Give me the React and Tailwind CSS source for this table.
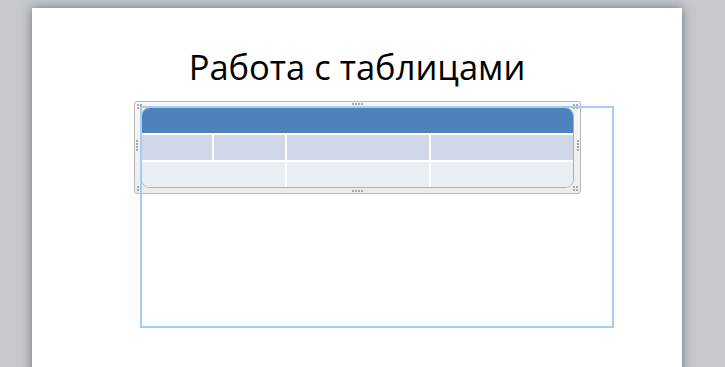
export default function App() {
  const dots = "flex gap-[1px]";
  const Dot = () => <span className="block h-[2px] w-[2px] bg-[#a8a8a8]" />;
  return (
    <div className="flex h-[367px] w-[725px] overflow-hidden bg-[#c5c9ce] pl-[32px] pt-[8px]">
      <div className="relative h-[400px] w-[650px] shrink-0 bg-white shadow-[0_0_10px_rgba(40,45,55,0.55)]">
        {/* slide title */}
        <div className="flex h-[84px] items-end justify-center pb-[8px] font-['Open_Sans',sans-serif] text-[34.5px] leading-none text-black">
          Работа с таблицами
        </div>

        {/* table selection frame */}
        <div className="relative ml-[102px] mt-[9px] w-[447px] rounded-[3px] border border-[#b9b9b9] bg-gradient-to-b from-[#f7f7f7] to-[#ececec] px-[6px] py-[5px]">
          <div className="overflow-hidden rounded-[9px] border border-[#a9b0bb] bg-white">
            <div className="h-[25px] bg-[#4f81bd]" />
            <div className="mt-[2px] flex h-[25px] gap-[2px]">
              <div className="w-[70px] bg-[#d0d8e8]" />
              <div className="w-[71px] bg-[#d0d8e8]" />
              <div className="w-[142px] bg-[#d0d8e8]" />
              <div className="flex-1 bg-[#d0d8e8]" />
            </div>
            <div className="mt-[2px] flex h-[25px] gap-[2px]">
              <div className="w-[143px] bg-[#e9edf4]" />
              <div className="w-[142px] bg-[#e9edf4]" />
              <div className="flex-1 bg-[#e9edf4]" />
            </div>
          </div>
          {/* resize handles */}
          <div className="absolute left-[2px] top-[2px] grid grid-cols-2 gap-[1px]"><Dot /><Dot /><Dot /><Dot /></div>
          <div className="absolute right-[2px] top-[2px] grid grid-cols-2 gap-[1px]"><Dot /><Dot /><Dot /><Dot /></div>
          <div className="absolute bottom-[2px] left-[2px] grid grid-cols-2 gap-[1px]"><Dot /><Dot /><Dot /><Dot /></div>
          <div className="absolute bottom-[2px] right-[2px] grid grid-cols-2 gap-[1px]"><Dot /><Dot /><Dot /><Dot /></div>
          <div className={`absolute left-[217px] top-[1px] ${dots}`}><Dot /><Dot /><Dot /><Dot /></div>
          <div className={`absolute bottom-[1px] left-[217px] ${dots}`}><Dot /><Dot /><Dot /><Dot /></div>
          <div className="absolute left-[1px] top-[38px] flex flex-col gap-[1px]"><Dot /><Dot /><Dot /><Dot /></div>
          <div className="absolute right-[1px] top-[38px] flex flex-col gap-[1px]"><Dot /><Dot /><Dot /><Dot /></div>
        </div>

        {/* text box outline */}
        <div className="pointer-events-none absolute left-[108px] top-[98px] h-[222px] w-[474px] border-2 border-[#a3cdf7]" />
      </div>
    </div>
  );
}
